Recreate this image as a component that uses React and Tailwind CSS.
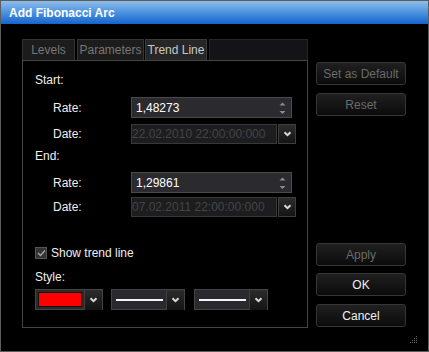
import React from "react";

function Chevron() {
  return (
    <svg width="9" height="6" viewBox="0 0 9 6">
      <path d="M1.5 1.2 L4.5 4.2 L7.5 1.2" fill="none" stroke="#d8d8d8" strokeWidth="2" />
    </svg>
  );
}

function DropBtn({ className = "" }) {
  return (
    <div className={"w-[18px] h-[20px] border border-[#3e3e3e] bg-gradient-to-b from-[#2c2c2c] to-[#141414] flex items-center justify-center shrink-0 " + className}>
      <Chevron />
    </div>
  );
}

function Spin() {
  return (
    <svg width="7" height="14" viewBox="0 0 7 14">
      <path d="M0.5 4.5 L3.5 1.5 L6.5 4.5 Z" fill="#8c8c8c" />
      <path d="M0.5 10 L3.5 13 L6.5 10 Z" fill="#8c8c8c" />
    </svg>
  );
}

function Btn({ children, disabled, className = "" }) {
  return (
    <div
      className={
        "w-[90px] h-[23px] rounded-[3px] border border-[#363636] bg-gradient-to-b from-[#202020] to-[#0b0b0b] flex items-center justify-center text-[12px] " +
        (disabled ? "text-[#6a6a6a] " : "text-[#f0f0f0] ") +
        className
      }
    >
      {children}
    </div>
  );
}

function LineSelect({ className = "" }) {
  return (
    <div className={"w-[74px] h-[21px] border border-[#444] bg-[#2a2a2e] flex items-center " + className}>
      <div className="flex-1 flex items-center pl-[4px] pr-[3px]">
        <div className="h-[2px] w-full bg-[#f4f4f4]" />
      </div>
      <DropBtn className="h-[19px] w-[18px] border-y-0 border-r-0" />
    </div>
  );
}

export default function App() {
  return (
    <div className="relative w-[429px] h-[352px] bg-black border border-[#5c5c5c] flex flex-col font-['Liberation_Sans',Arial,sans-serif] text-[12px] text-[#eeeeee] overflow-hidden">
      <div className="h-[23px] shrink-0 bg-gradient-to-b from-[#90bde9] via-[#4a92df] to-[#1464cc] text-white font-bold text-[12px] pl-[8px] flex items-center">
        Add Fibonacci Arc
      </div>
      <div className="flex flex-1 pt-[15px] pl-[21px]">
        {/* left column */}
        <div className="w-[286px] flex flex-col">
          <div className="h-[21px] flex items-stretch">
            <div className="w-[53px] border border-b-0 border-[#333] bg-[#1c1c1c] text-[#777] flex items-center justify-center">Levels</div>
            <div className="w-[67px] ml-[2px] border border-b-0 border-[#333] bg-[#1c1c1c] text-[#777] flex items-center justify-center">Parameters</div>
            <div className="w-[62px] ml-[1px] border border-b-0 border-[#3a3a3a] bg-[#262626] text-[#c8c8c8] flex items-center justify-center">Trend Line</div>
            <div className="flex-1 ml-[2px] border border-b-0 border-[#262626] bg-[#141418]" />
          </div>
          <div className="h-[268px] border border-[#444] flex flex-col pt-[10px] pl-[12px]">
            <div className="h-[18px] flex items-center">Start:</div>
            <div className="mt-[8px] h-[21px] flex items-center">
              <div className="w-[96px] pl-[18px]">Rate:</div>
              <div className="w-[161px] h-[21px] border border-[#4a4a4a] bg-[#2b2b2f] flex items-center pl-[4px] pr-[5px] text-white">
                <span className="flex-1">1,48273</span>
                <Spin />
              </div>
            </div>
            <div className="mt-[5px] h-[21px] flex items-center">
              <div className="w-[96px] pl-[18px]">Date:</div>
              <div className="w-[146px] h-[20px] border border-[#383838] bg-[#1d1d20] flex items-center pl-[0px] text-[#444]">
                22.02.2010 22:00:00:000
              </div>
              <DropBtn className="ml-[1px]" />
            </div>
            <div className="mt-[3px] h-[18px] flex items-center">End:</div>
            <div className="mt-[7px] h-[21px] flex items-center">
              <div className="w-[96px] pl-[18px]">Rate:</div>
              <div className="w-[161px] h-[21px] border border-[#4a4a4a] bg-[#2b2b2f] flex items-center pl-[4px] pr-[5px] text-white">
                <span className="flex-1">1,29861</span>
                <Spin />
              </div>
            </div>
            <div className="mt-[3px] h-[21px] flex items-center">
              <div className="w-[96px] pl-[18px]">Date:</div>
              <div className="w-[146px] h-[20px] border border-[#383838] bg-[#1d1d20] flex items-center pl-[0px] text-[#444]">
                07.02.2011 22:00:00:000
              </div>
              <DropBtn className="ml-[1px]" />
            </div>
            <div className="mt-[29px] h-[14px] flex items-center">
              <div className="w-[12px] h-[12px] border border-[#555] bg-[#333] flex items-center justify-center">
                <svg width="9" height="8" viewBox="0 0 9 8">
                  <path d="M1 4 L3.5 6.5 L8 1.5" fill="none" stroke="#a0a0a0" strokeWidth="1.5" />
                </svg>
              </div>
              <span className="ml-[4px]">Show trend line</span>
            </div>
            <div className="mt-[8px] h-[18px] flex items-center">Style:</div>
            <div className="mt-[3px] h-[21px] flex items-center">
              <div className="w-[68px] h-[21px] border border-[#444] bg-[#2a2a2a] flex items-center pl-[3px]">
                <div className="w-[42px] h-[13px] bg-[#ff0000] outline outline-1 outline-[#111]" />
                <DropBtn className="ml-[3px] h-[19px] border-y-0 border-r-0" />
              </div>
              <LineSelect className="ml-[8px]" />
              <LineSelect className="ml-[9px]" />
            </div>
          </div>
        </div>
        {/* right column */}
        <div className="ml-[8px] flex flex-col">
          <Btn disabled className="mt-[23px]">Set as Default</Btn>
          <Btn disabled className="mt-[8px]">Reset</Btn>
          <Btn disabled className="mt-[127px]">Apply</Btn>
          <Btn className="mt-[7px]">OK</Btn>
          <Btn className="mt-[8px]">Cancel</Btn>
        </div>
      </div>
      <svg className="absolute right-[10px] bottom-[7px]" width="8" height="8" viewBox="0 0 8 8">
        <rect x="6" y="0" width="1" height="1" fill="#666" />
        <rect x="4" y="2" width="1" height="1" fill="#666" />
        <rect x="6" y="2" width="1" height="1" fill="#666" />
        <rect x="2" y="4" width="1" height="1" fill="#666" />
        <rect x="4" y="4" width="1" height="1" fill="#666" />
        <rect x="6" y="4" width="1" height="1" fill="#666" />
        <rect x="0" y="6" width="1" height="1" fill="#666" />
        <rect x="2" y="6" width="1" height="1" fill="#666" />
        <rect x="4" y="6" width="1" height="1" fill="#666" />
        <rect x="6" y="6" width="1" height="1" fill="#666" />
      </svg>
    </div>
  );
}
